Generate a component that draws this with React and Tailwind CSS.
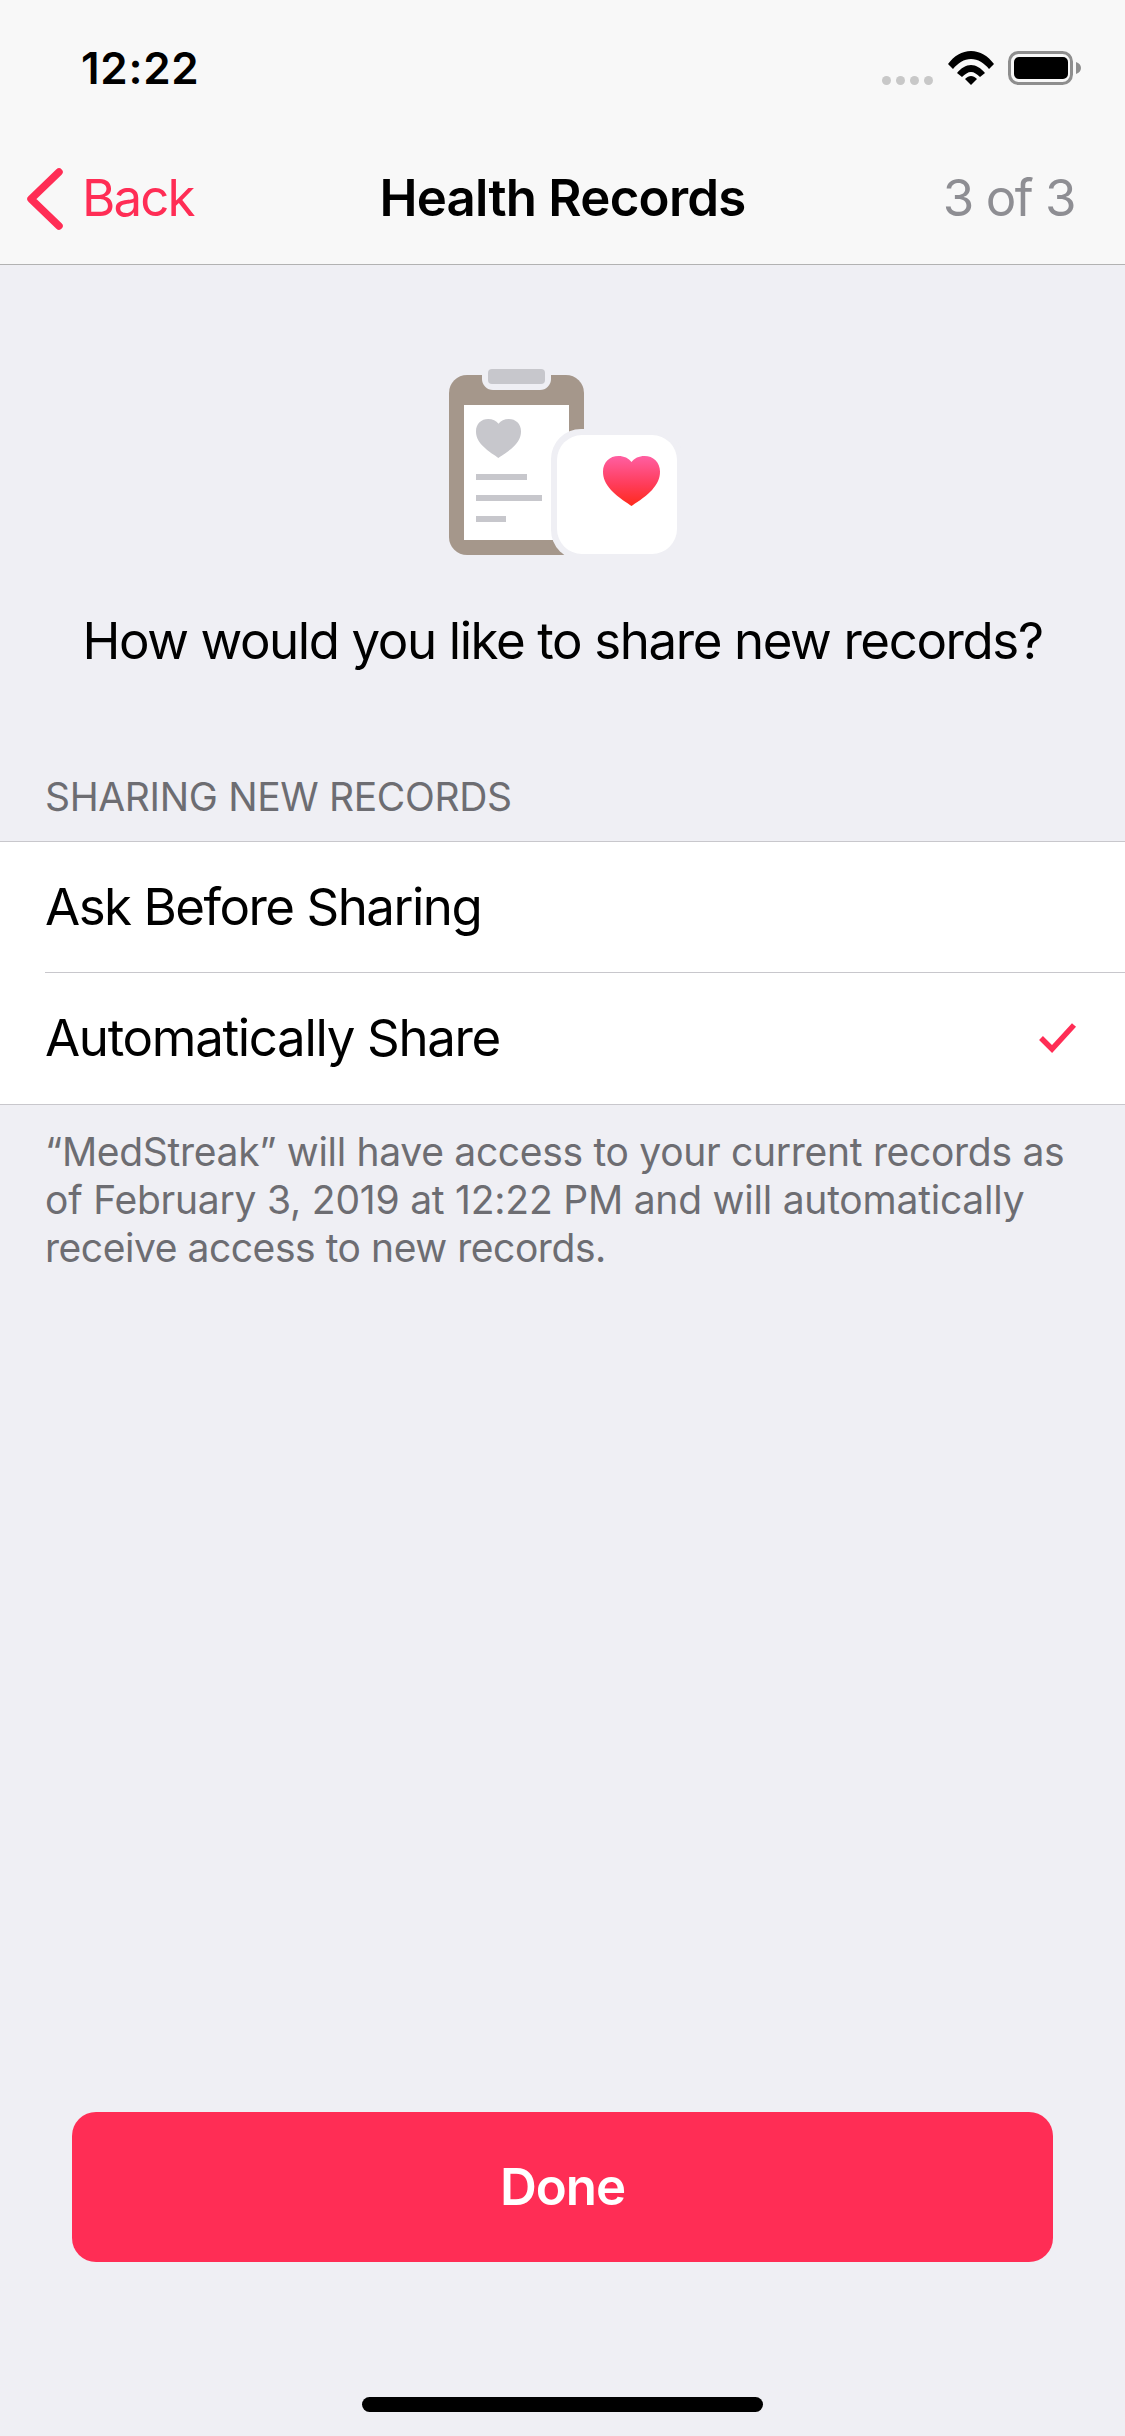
import React from "react";

function Heart({ x, y, w, h, fill }) {
  // Heart drawn in a 100x90 box
  return (
    <svg x={x} y={y} width={w} height={h} viewBox="0 0 100 90" preserveAspectRatio="none">
      <path d="M50 90C44 85 28 76 14 61C4 50 0 40 0 28C0 11 12 0 27 0C37 0 45 4 50 11C55 4 63 0 73 0C88 0 100 11 100 28C100 40 96 50 86 61C72 76 56 85 50 90Z" fill={fill} />
    </svg>
  );
}

function Illustration() {
  return (
    <svg width="232" height="190" viewBox="0 0 232 190" className="block">
      <defs>
        <linearGradient id="hg" x1="0" y1="0" x2="0" y2="1">
          <stop offset="0" stopColor="#ff5fa2" />
          <stop offset="0.55" stopColor="#ff3d5c" />
          <stop offset="1" stopColor="#ff2a1c" />
        </linearGradient>
      </defs>
      <rect x="0" y="6" width="135" height="180" rx="18" fill="#a5978b" />
      <rect x="33" y="-8" width="69" height="29" rx="11" fill="#efeff4" />
      <rect x="39" y="0" width="57" height="15" rx="4" fill="#c7c7cc" />
      <rect x="15" y="36" width="105" height="135" fill="#fff" />
      <Heart x={27} y={50} w={45} h={39} fill="#c7c7cc" />
      <rect x="27" y="105" width="51" height="6" fill="#c7c7cc" />
      <rect x="27" y="126" width="66" height="6" fill="#c7c7cc" />
      <rect x="27" y="147" width="30" height="6" fill="#c7c7cc" />
      <rect x="102" y="60" width="132" height="131" rx="30" fill="#efeff4" />
      <rect x="108" y="66" width="120" height="119" rx="25" fill="#fff" />
      <Heart x={154} y={87} w={57} h={50} fill="url(#hg)" />
    </svg>
  );
}

export default function App() {
  return (
    <div className="w-[1125px] h-[2436px] bg-[#efeff4] flex flex-col text-black" style={{ fontFamily: "Inter, 'Liberation Sans', sans-serif" }}>
      <header className="bg-[#f8f8f8] border-b border-[#b2b2b2] h-[265px] flex flex-col">
        <div className="h-[136px] flex items-center justify-between pl-[81px] pr-[43px]">
          <span className="text-[44px] font-semibold leading-none tracking-[0.7px]">12:22</span>
          <div className="flex items-center">
            <div className="flex gap-[5px] mt-[25px] mr-[15px]">
              <span className="w-[9px] h-[9px] rounded-full bg-[#c8c8c8]" />
              <span className="w-[9px] h-[9px] rounded-full bg-[#c8c8c8]" />
              <span className="w-[9px] h-[9px] rounded-full bg-[#c8c8c8]" />
              <span className="w-[9px] h-[9px] rounded-full bg-[#c8c8c8]" />
            </div>
            <svg width="46" height="34" viewBox="0 0 46 34" className="mr-[14px]">
              <path d="M0 13C6 5 14 0 23 0C32 0 40 5 46 13L41 18C36 12 30 8 23 8C16 8 10 12 5 18Z" fill="#000" />
              <path d="M9 22C13 17 18 14 23 14C28 14 33 17 37 22L32 26C29 23 26 21 23 21C20 21 17 23 14 26Z" fill="#000" />
              <path d="M17 28C19 26 21 25 23 25C25 25 27 26 29 28L23 34Z" fill="#000" />
            </svg>
            <svg width="74" height="34" viewBox="0 0 74 34">
              <rect x="1.5" y="1.5" width="62" height="31" rx="9" fill="none" stroke="#8e8e8e" strokeWidth="3" />
              <rect x="6" y="6" width="54" height="22" rx="5" fill="#000" />
              <path d="M68 11C71 12 73 14 73 17C73 20 71 22 68 23Z" fill="#8e8e8e" />
            </svg>
          </div>
        </div>
        <div className="flex-1 relative flex items-center justify-between pl-[26px] pr-[50px] pb-[6px]">
          <div className="flex items-center">
            <svg width="38" height="62" viewBox="0 0 38 62" className="mr-[18px] mt-[3px]">
              <path d="M33 4L5 31L33 58" fill="none" stroke="#ff2d55" strokeWidth="7.5" strokeLinecap="round" strokeLinejoin="round" />
            </svg>
            <span className="text-[51px] leading-none text-[#ff2d55] tracking-[-1.9px]">Back</span>
          </div>
          <span className="absolute left-0 right-0 text-center text-[51px] font-semibold leading-none tracking-[-0.75px]">Health Records</span>
          <span className="text-[51px] leading-none text-[#8e8e93] tracking-[-1.5px]">3 of 3</span>
        </div>
      </header>

      <main className="flex-1 flex flex-col">
        <div className="flex justify-center pt-[104px] pl-[5px]">
          <Illustration />
        </div>
        <p className="mt-[52px] text-center text-[51px] leading-[60px] tracking-[-1.4px]">How would you like to share new records?</p>
        <p className="mt-[102px] pl-[45px] text-[39px] leading-[48px] text-[#6d6d72] tracking-[-0.35px]">SHARING NEW RECORDS</p>
        <div className="mt-[20px] bg-white border-y border-[#c8c7cc]">
          <div className="h-[130px] flex items-center pl-[45px] text-[51px] tracking-[-1.5px]">Ask Before Sharing</div>
          <div className="pl-[45px] ml-[0px] h-[132px] flex items-center justify-between pr-[48px] text-[51px] tracking-[-1.33px] relative">
            <span className="absolute top-0 left-[45px] right-0 h-px bg-[#c8c7cc]" />
            <span>Automatically Share</span>
            <svg width="38" height="32" viewBox="0 0 38 32">
              <path d="M2 16L13 27L35 3" fill="none" stroke="#ff2d55" strokeWidth="5.5" strokeLinejoin="miter" />
            </svg>
          </div>
        </div>
        <p className="mt-[23px] pl-[45px] text-[39px] leading-[48px] text-[#6d6d72] tracking-[-0.3px]">
          “MedStreak” will have access to your current records as<br />
          <span className="tracking-[-0.22px]">of February 3, 2019 at 12:22 PM and will automatically</span><br />
          <span className="tracking-[-0.45px]">receive access to new records.</span>
        </p>
        <div className="flex-1" />
        <div className="px-[72px]">
          <button className="w-full h-[150px] rounded-[24px] bg-[#ff2d55] text-white text-[51px] font-semibold tracking-[-1px]">Done</button>
        </div>
        <div className="h-[174px] flex justify-center pt-[135px]">
          <div className="w-[401px] h-[15px] rounded-full bg-black" />
        </div>
      </main>
    </div>
  );
}
